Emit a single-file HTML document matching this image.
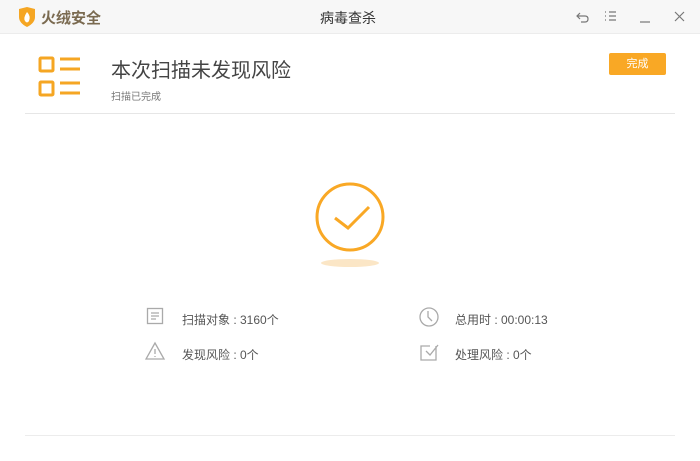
<!DOCTYPE html>
<html><head><meta charset="utf-8"><style>
body{margin:0;width:700px;height:461px;background:#fff;position:relative;overflow:hidden;font-family:"Liberation Sans","Noto Sans CJK SC",sans-serif;}
.a{position:absolute}
.tb{left:0;top:0;width:700px;height:33px;background:#f7f7f7;border-bottom:1px solid #ececec}
.t{color:#333;font-size:14px}
.s{color:#555;font-size:12px}
</style></head><body>
<div class="a tb"></div>
<svg class="a" style="left:18px;top:7px" width="18" height="20" viewBox="0 0 18 20"><path d="M1 2L9 0L17 2V10Q17 16 9 20Q1 16 1 10Z" fill="#f5a623"/><path d="M9 5Q13 9 11 14Q9 17 7 14Q5 11 9 5Z" fill="#fff"/></svg>
<div class="a" style="left:41px;top:7px;font-size:15px;font-weight:bold;color:#7a6a50">火绒安全</div>
<div class="a t" style="left:320px;top:8px;color:#333">病毒查杀</div>
<svg class="a" style="left:576px;top:9px" width="110" height="16" viewBox="0 0 110 16" fill="none" stroke="#777" stroke-width="1.2"><path d="M4 4L1 7L4 10M1 7H9Q12 7 12 10Q12 13 9 13H5"/><path d="M29 3h1M29 7h1M29 11h1M33 3h7M33 7h7M33 11h7"/><path d="M64 13h10"/><path d="M99 3l9 9M108 3l-9 9"/></svg>
<svg class="a" style="left:37px;top:55px" width="46" height="45" viewBox="0 0 46 45" fill="none" stroke="#f5a623" stroke-width="3"><rect x="3" y="3" width="13" height="13" rx="1"/><rect x="3" y="27" width="13" height="13" rx="1"/><path d="M23 4h20M23 14h20M23 28h20M23 38h20"/></svg>
<div class="a" style="left:111px;top:54px;font-size:20px;color:#444">本次扫描未发现风险</div>
<div class="a" style="left:111px;top:88px;font-size:10px;color:#777">扫描已完成</div>
<div class="a" style="left:609px;top:53px;width:57px;height:22px;background:#f9a825;border-radius:2px;color:#fff;font-size:11px;text-align:center;line-height:22px">完成</div>
<div class="a" style="left:25px;top:113px;width:650px;height:1px;background:#e6e6e6"></div>
<svg class="a" style="left:310px;top:178px" width="80" height="94" viewBox="0 0 80 94"><ellipse cx="40" cy="85" rx="29" ry="4" fill="#fbe6c6"/><circle cx="40" cy="39" r="33" fill="none" stroke="#f9a825" stroke-width="3"/><path d="M25 40L38 50L59 29" fill="none" stroke="#f9a825" stroke-width="3"/></svg>
<svg class="a" style="left:145px;top:306px" width="22" height="60" viewBox="0 0 22 60" fill="none" stroke="#aaa" stroke-width="1.3"><rect x="2.5" y="2.5" width="15" height="15"/><path d="M6 7h8M6 10h8M6 13h5"/><path d="M10 37L1 53H19Z"/><path d="M10 43v5M10 50v1"/></svg>
<div class="a s" style="left:182px;top:311px">扫描对象 : 3160个</div>
<div class="a s" style="left:182px;top:346px">发现风险 : 0个</div>
<svg class="a" style="left:418px;top:306px" width="22" height="60" viewBox="0 0 22 60" fill="none" stroke="#aaa" stroke-width="1.3"><circle cx="11" cy="11" r="9"/><path d="M10 5v6l4 4"/><path d="M18 40v14H3V40h9M8 45l4 4l8-10"/></svg>
<div class="a s" style="left:455px;top:311px">总用时 : 00:00:13</div>
<div class="a s" style="left:455px;top:346px">处理风险 : 0个</div>
<div class="a" style="left:25px;top:435px;width:650px;height:1px;background:#ececec"></div>
</body></html>
